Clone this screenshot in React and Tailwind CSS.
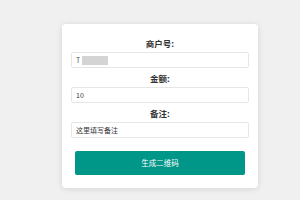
import React from 'react';

const font = { fontFamily: '"Noto Sans CJK SC", "Noto Sans", sans-serif' };

function Field({ label, children }) {
    return (
        <div className="flex flex-col">
            <div className="h-[14px] flex items-center justify-center text-[8.5px] font-bold text-[#333]">{label}</div>
            <div className="mt-[2px] h-[16px] border border-[#e6e6e6] rounded-[2px] bg-white flex items-center px-[4px] text-[7px] text-[#333]">
                {children}
            </div>
        </div>
    );
}

export default function App() {
    return (
        <div className="w-[300px] h-[200px] bg-[#f0f0f0] overflow-hidden" style={font}>
            <div className="pt-[24px] pl-[62px]">
                <div className="w-[196px] bg-white rounded-[4px] shadow-[0_1px_6px_rgba(0,0,0,0.12)] px-[9px] pt-[12px] pb-[13px]">
                    <div className="flex flex-col gap-[3px]">
                        <Field label="商户号:">
                            <span className="text-[#555]">T</span>
                            <span className="ml-[2px] w-[26px] h-[9px] bg-[#d4d4d4] blur-[0.6px]" />
                        </Field>
                        <Field label="金额:">10</Field>
                        <Field label="备注:">这里填写备注</Field>
                    </div>
                    <button className="mt-[13px] mx-[4px] w-[170px] h-[24px] bg-[#009688] rounded-[2px] text-white text-[7.5px] flex items-center justify-center">
                        生成二维码
                    </button>
                </div>
            </div>
        </div>
    );
}
